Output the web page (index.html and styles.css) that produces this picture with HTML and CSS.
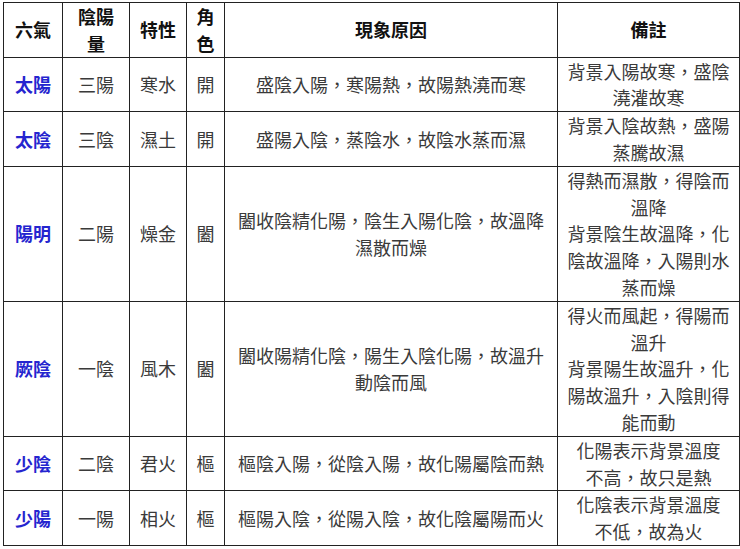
FILE: index.html
```html
<!DOCTYPE html>
<html lang="zh-Hant">
<head>
<meta charset="utf-8">
<title>六氣</title>
<link rel="stylesheet" href="styles.css">
</head>
<body>
<table class="qi-table">
  <colgroup>
    <col class="c1"><col class="c2"><col class="c3"><col class="c4"><col class="c5"><col class="c6">
  </colgroup>
  <thead>
    <tr>
      <th>六氣</th><th>陰陽量</th><th>特性</th><th>角色</th><th>現象原因</th><th>備註</th>
    </tr>
  </thead>
  <tbody>
    <tr>
      <td class="name">太陽</td><td>三陽</td><td>寒水</td><td>開</td>
      <td>盛陰入陽，寒陽熱，故陽熱澆而寒</td>
      <td>背景入陽故寒，盛陰澆灌故寒</td>
    </tr>
    <tr>
      <td class="name">太陰</td><td>三陰</td><td>濕土</td><td>開</td>
      <td>盛陽入陰，蒸陰水，故陰水蒸而濕</td>
      <td>背景入陰故熱，盛陽蒸騰故濕</td>
    </tr>
    <tr>
      <td class="name">陽明</td><td>二陽</td><td>燥金</td><td>闔</td>
      <td>闔收陰精化陽，陰生入陽化陰，故溫降濕散而燥</td>
      <td>得熱而濕散，得陰而溫降<br>背景陰生故溫降，化陰故溫降，入陽則水蒸而燥</td>
    </tr>
    <tr>
      <td class="name">厥陰</td><td>一陰</td><td>風木</td><td>闔</td>
      <td>闔收陽精化陰，陽生入陰化陽，故溫升動陰而風</td>
      <td>得火而風起，得陽而溫升<br>背景陽生故溫升，化陽故溫升，入陰則得能而動</td>
    </tr>
    <tr>
      <td class="name">少陰</td><td>二陰</td><td>君火</td><td>樞</td>
      <td>樞陰入陽，從陰入陽，故化陽屬陰而熱</td>
      <td>化陽表示背景溫度<br>不高，故只是熱</td>
    </tr>
    <tr>
      <td class="name">少陽</td><td>一陽</td><td>相火</td><td>樞</td>
      <td>樞陽入陰，從陽入陰，故化陰屬陽而火</td>
      <td>化陰表示背景溫度<br>不低，故為火</td>
    </tr>
  </tbody>
</table>
</body>
</html>
```
FILE: styles.css
```css
html, body {
  margin: 0;
  padding: 0;
  background: #ffffff;
}
body {
  padding: 2px 0 0 3px;
  font-family: "Noto Sans CJK TC", "Noto Sans CJK SC", sans-serif;
}
.qi-table {
  border-collapse: collapse;
  table-layout: fixed;
  width: 736px;
  font-size: 18px;
  line-height: 26.8px;
  color: #3a3a3a;
}
.c1 { width: 59px; }
.c2 { width: 67px; }
.c3 { width: 57px; }
.c4 { width: 38px; }
.c5 { width: 333px; }
.c6 { width: 182px; }
.qi-table th,
.qi-table td {
  border: 1px solid #222222;
  padding: 0 8px;
  text-align: center;
  vertical-align: middle;
  font-weight: 400;
}
.qi-table th {
  font-weight: 700;
  color: #111111;
}
.qi-table td.name {
  color: #2525cf;
  font-weight: 700;
}
.qi-table th:nth-child(4) {
  padding: 0 2px;
}
```
